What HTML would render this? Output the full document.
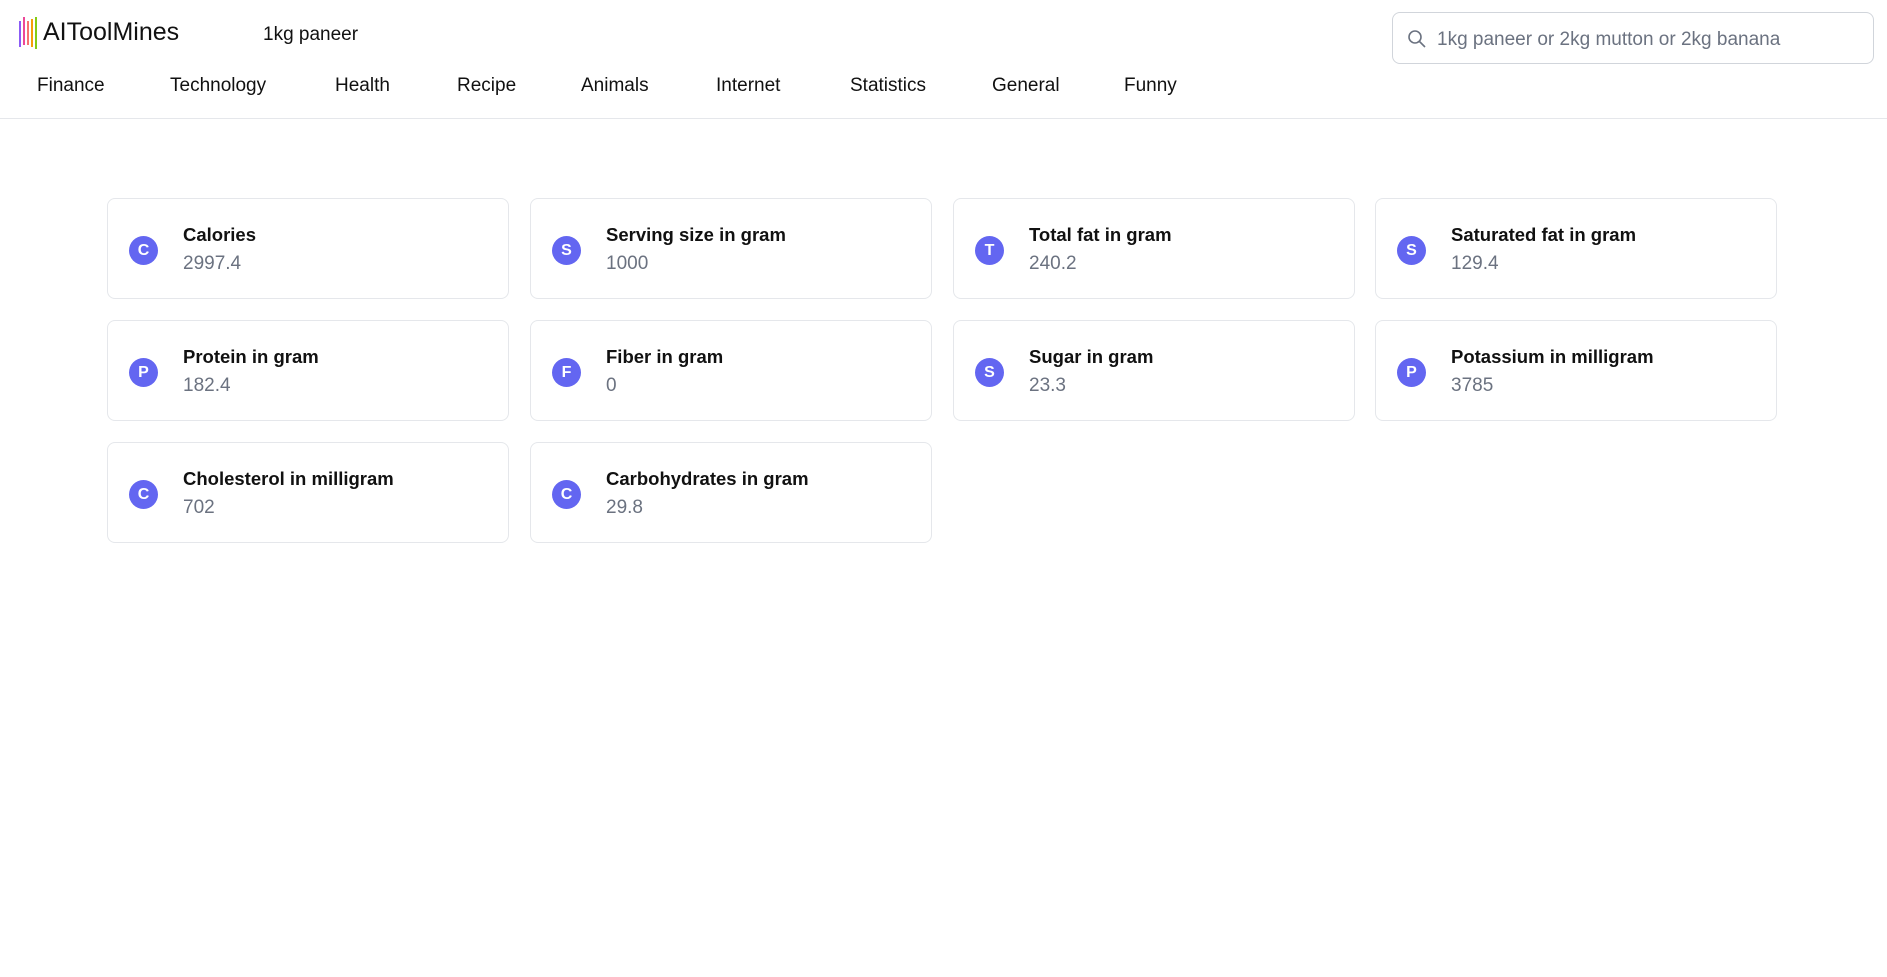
<!DOCTYPE html>
<html><head><meta charset="utf-8"><style>
*{box-sizing:border-box;margin:0;padding:0}
body{width:1887px;height:977px;background:#fff;font-family:"Liberation Sans",sans-serif;color:#111;position:relative;overflow:hidden}
header{position:absolute;left:0;top:0;width:1887px;height:119px;border-bottom:1px solid #e5e7eb}
.logo{position:absolute;left:19px;top:17px;width:18px;height:32px}
.brand{position:absolute;left:43px;top:18px;font-size:25px;color:#111}
.q{position:absolute;left:263px;top:24px;font-size:19px}
.nav{position:absolute;top:75px;font-size:19px}
.search{position:absolute;left:1392px;top:12px;width:482px;height:52px;border:1px solid #d1d5db;border-radius:8px}
.search span{position:absolute;left:44px;top:16px;font-size:19px;color:#6b7280}
.search svg{position:absolute;left:14px;top:16px}
.card{position:absolute;width:402px;height:101px;border:1px solid #e5e7eb;border-radius:8px}
.c{position:absolute;left:21px;top:37px;width:29px;height:29px;border-radius:50%;background:#6366f1;color:#fff;font-size:16px;font-weight:bold;text-align:center;line-height:29px}
.t{position:absolute;left:75px;top:25px;font-size:18.5px;font-weight:bold;color:#111}
.v{position:absolute;left:75px;top:54px;font-size:19px;color:#6b7280}
</style></head><body>
<header>
<svg class="logo" viewBox="0 0 18 32"><rect x="0" y="4" width="2" height="26" fill="#8b5cf6"/><rect x="4" y="0" width="2" height="28" fill="#ec4899"/><rect x="8" y="4" width="2" height="24" fill="#f87171"/><rect x="12" y="2" width="2" height="28" fill="#f59e0b"/><rect x="16" y="0" width="2" height="32" fill="#84cc16"/></svg>
<div class="brand">AIToolMines</div>
<div class="q">1kg paneer</div>
<div class="nav" style="left:37px">Finance</div>
<div class="nav" style="left:170px">Technology</div>
<div class="nav" style="left:335px">Health</div>
<div class="nav" style="left:457px">Recipe</div>
<div class="nav" style="left:581px">Animals</div>
<div class="nav" style="left:716px">Internet</div>
<div class="nav" style="left:850px">Statistics</div>
<div class="nav" style="left:992px">General</div>
<div class="nav" style="left:1124px">Funny</div>
<div class="search"><svg width="20" height="20" viewBox="0 0 20 20" fill="none" stroke="#6b7280" stroke-width="1.6"><circle cx="8" cy="8" r="6"/><path d="M12.5 12.5L18 18"/></svg><span>1kg paneer or 2kg mutton or 2kg banana</span></div>
</header>
<div class="card" style="left:107px;top:198px"><div class="c">C</div><div class="t">Calories</div><div class="v">2997.4</div></div>
<div class="card" style="left:530px;top:198px"><div class="c">S</div><div class="t">Serving size in gram</div><div class="v">1000</div></div>
<div class="card" style="left:953px;top:198px"><div class="c">T</div><div class="t">Total fat in gram</div><div class="v">240.2</div></div>
<div class="card" style="left:1375px;top:198px"><div class="c">S</div><div class="t">Saturated fat in gram</div><div class="v">129.4</div></div>
<div class="card" style="left:107px;top:320px"><div class="c">P</div><div class="t">Protein in gram</div><div class="v">182.4</div></div>
<div class="card" style="left:530px;top:320px"><div class="c">F</div><div class="t">Fiber in gram</div><div class="v">0</div></div>
<div class="card" style="left:953px;top:320px"><div class="c">S</div><div class="t">Sugar in gram</div><div class="v">23.3</div></div>
<div class="card" style="left:1375px;top:320px"><div class="c">P</div><div class="t">Potassium in milligram</div><div class="v">3785</div></div>
<div class="card" style="left:107px;top:442px"><div class="c">C</div><div class="t">Cholesterol in milligram</div><div class="v">702</div></div>
<div class="card" style="left:530px;top:442px"><div class="c">C</div><div class="t">Carbohydrates in gram</div><div class="v">29.8</div></div>
</body></html>
